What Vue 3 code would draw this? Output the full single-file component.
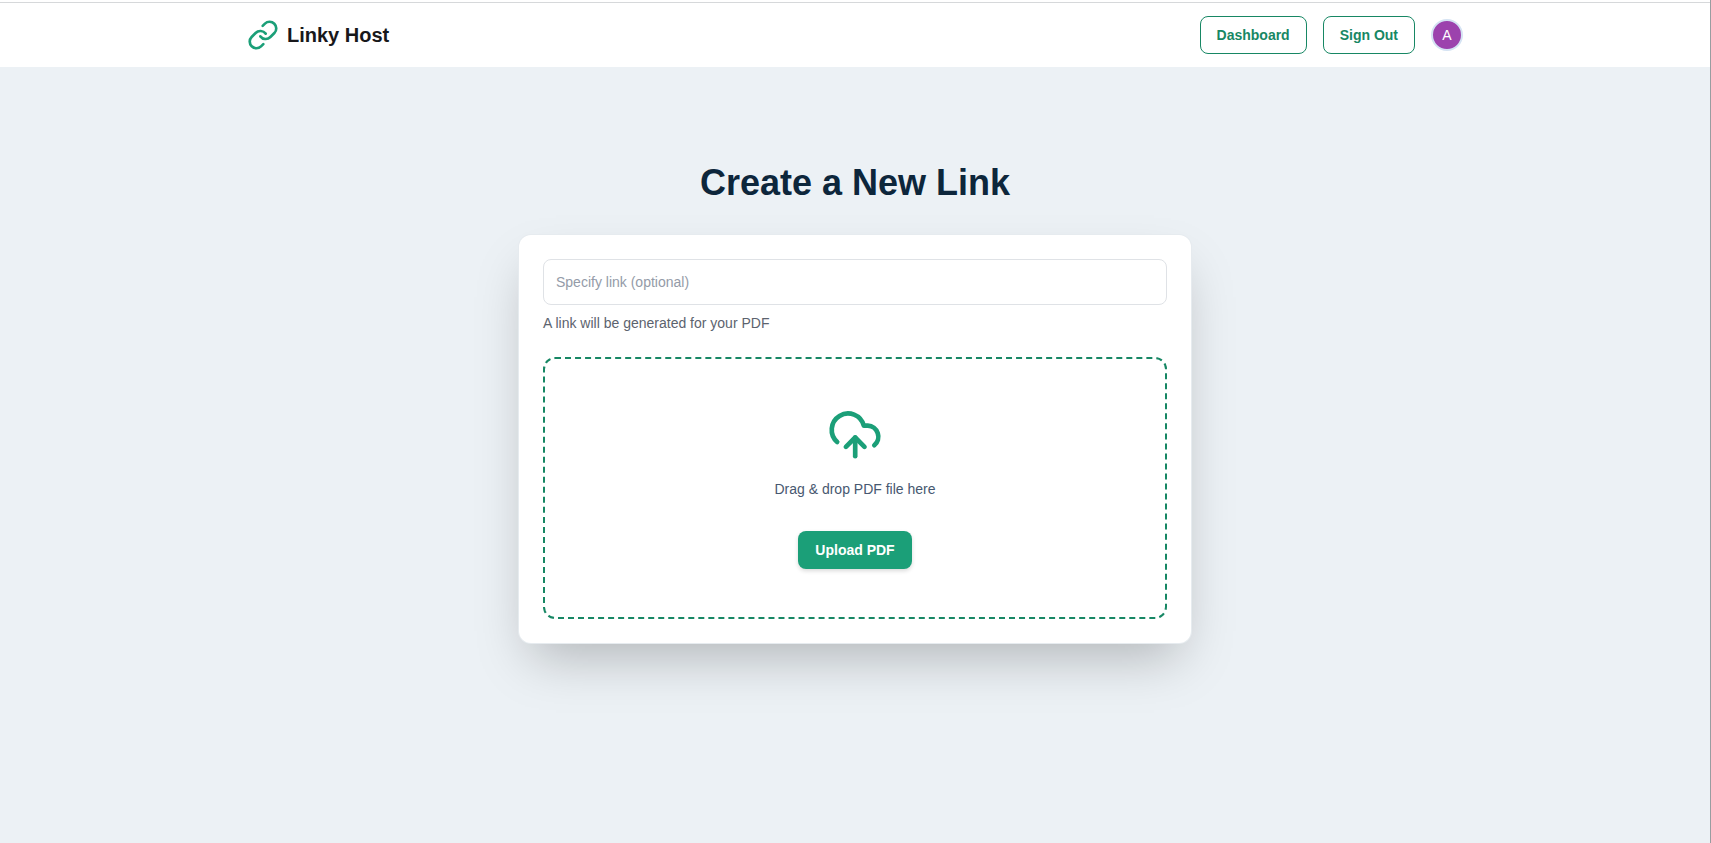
<script setup>
import { ref } from 'vue'

const slug = ref('')
const fileInput = ref(null)

function openPicker() {
  fileInput.value.click()
}
</script>

<template>
  <div class="page">
    <header class="header">
      <div class="header-inner">
        <a class="brand" href="#">
          <svg class="brand-icon" viewBox="0 0 24 24" aria-hidden="true">
            <path d="M10 13a5 5 0 0 0 7.54.54l3-3a5 5 0 0 0-7.07-7.07l-1.72 1.71" />
            <path d="M14 11a5 5 0 0 0-7.54-.54l-3 3a5 5 0 0 0 7.07 7.07l1.71-1.71" />
          </svg>
          <span>Linky Host</span>
        </a>
        <nav class="nav">
          <a class="nav-button" href="#">Dashboard</a>
          <button class="nav-button" type="button">Sign Out</button>
          <button class="avatar" type="button" aria-label="Account">A</button>
        </nav>
      </div>
    </header>

    <main class="main">
      <h1 class="title">Create a New Link</h1>
      <section class="card">
        <input
          id="slug"
          v-model="slug"
          class="link-input"
          type="text"
          placeholder="Specify link (optional)"
        />
        <label class="hint" for="slug">A link will be generated for your PDF</label>

        <div class="dropzone" @dragover.prevent @drop.prevent>
          <svg class="cloud" viewBox="0 0 56 56" aria-hidden="true">
            <path d="M10.2 35A16.3 16.3 0 1 1 36.8 18.7H40.8A11 11 0 0 1 47.3 38.2" />
            <path d="M28.2 49.2V30.5" />
            <path d="M18.9 39.8l9.3-9.3 9.3 9.3" />
          </svg>
          <p class="drop-text">Drag &amp; drop PDF file here</p>
          <button class="upload" type="button" @click="openPicker">Upload PDF</button>
          <input ref="fileInput" type="file" accept="application/pdf" aria-label="PDF file" hidden />
        </div>
      </section>
    </main>
  </div>
</template>

<style>
body {
  margin: 0;
  background: #ecf1f5;
}
</style>

<style scoped>
.page {
  box-sizing: border-box;
  min-height: 100vh;
  border-right: 1px solid #989da0;
  background: #ecf1f5;
  font-family: "Liberation Sans", Arial, sans-serif;
  font-size: 14px;
  line-height: 20px;
}

.header {
  padding-top: 2px;
  background: #fff;
}

.header-inner {
  display: flex;
  align-items: center;
  justify-content: space-between;
  height: 64px;
  border-top: 1px solid #d6d8da;
  padding: 0 max(32px, calc((100% - 1216px) / 2));
}

.brand {
  display: flex;
  align-items: center;
  gap: 8px;
  color: #18181b;
  font-size: 20px;
  font-weight: 700;
  line-height: 28px;
  text-decoration: none;
}

.brand-icon {
  width: 32px;
  height: 32px;
  fill: none;
  stroke: #1b9f78;
  stroke-width: 2;
  stroke-linecap: round;
  stroke-linejoin: round;
}

.nav {
  display: flex;
  align-items: center;
  gap: 16px;
}

.nav-button {
  padding: 8px 16px;
  border: 1px solid #178764;
  border-radius: 8px;
  background: #fff;
  color: #178764;
  font: inherit;
  font-weight: 700;
  text-decoration: none;
  cursor: pointer;
}

.avatar {
  width: 32px;
  height: 32px;
  padding: 0;
  border: 2px solid #d5e3f3;
  border-radius: 50%;
  background: #9c42ad;
  color: #fff;
  font: inherit;
  cursor: pointer;
}

.main {
  max-width: 672px;
  margin: 0 auto;
  padding: 96px 16px;
}

.title {
  margin: 0 0 32px;
  color: #0d263b;
  font-size: 36px;
  font-weight: 700;
  line-height: 40px;
  text-align: center;
}

.card {
  padding: 24px;
  border-radius: 12px;
  background: #fff;
  box-shadow:
    0 0 0 1px #e6ebef,
    0 25px 50px -12px rgba(0, 0, 0, 0.25);
}

.link-input {
  display: block;
  box-sizing: border-box;
  width: 100%;
  padding: 12px;
  border: 1px solid #dfe2e6;
  border-radius: 8px;
  background: #fff;
  color: #0d263b;
  font: inherit;
}

.link-input::placeholder {
  color: #949ba8;
  opacity: 1;
}

.hint {
  display: block;
  margin-top: 8px;
  color: #5c636e;
}

.dropzone {
  display: flex;
  flex-direction: column;
  align-items: center;
  margin-top: 24px;
  padding: 48px 16px;
  border: 2px dashed #178764;
  border-radius: 12px;
}

.cloud {
  width: 56px;
  height: 56px;
  fill: none;
  stroke: #1b9f78;
  stroke-width: 4.67;
  stroke-linecap: round;
  stroke-linejoin: round;
}

.drop-text {
  margin: 16px 0 32px;
  color: #475870;
}

.upload {
  padding: 9px 17px;
  border: 0;
  border-radius: 8px;
  background: #1b9f78;
  color: #fff;
  font: inherit;
  font-weight: 700;
  box-shadow: 0 2px 4px rgba(0, 0, 0, 0.15);
  cursor: pointer;
}
</style>
